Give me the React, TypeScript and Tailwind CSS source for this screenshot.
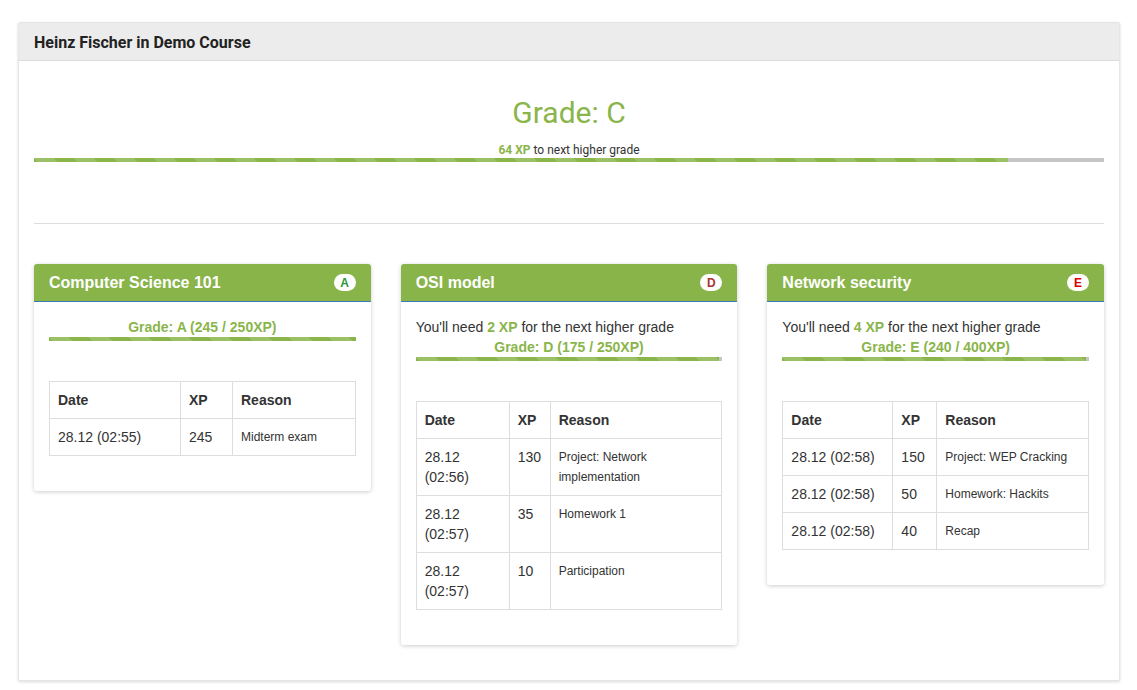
import React from "react";

type Row = { date: string; xp: number; reason: string };
type Course = {
  title: string;
  grade: string;
  badgeColor: string;
  need?: number;
  points: string;
  progress: number;
  dateCol: string;
  xpCol: string;
  rows: Row[];
};

const COURSES: Course[] = [
  {
    title: "Computer Science 101",
    grade: "A",
    badgeColor: "text-[#2a9a3a]",
    points: "245 / 250XP",
    progress: 100,
    dateCol: "w-[131px]",
    xpCol: "w-[52px]",
    rows: [{ date: "28.12 (02:55)", xp: 245, reason: "Midterm exam" }],
  },
  {
    title: "OSI model",
    grade: "D",
    badgeColor: "text-[#a33]",
    need: 2,
    points: "175 / 250XP",
    progress: 99,
    dateCol: "w-[93px]",
    xpCol: "w-[41px]",
    rows: [
      { date: "28.12 (02:56)", xp: 130, reason: "Project: Network implementation" },
      { date: "28.12 (02:57)", xp: 35, reason: "Homework 1" },
      { date: "28.12 (02:57)", xp: 10, reason: "Participation" },
    ],
  },
  {
    title: "Network security",
    grade: "E",
    badgeColor: "text-[#d00]",
    need: 4,
    points: "240 / 400XP",
    progress: 99,
    dateCol: "w-[110px]",
    xpCol: "w-[44px]",
    rows: [
      { date: "28.12 (02:58)", xp: 150, reason: "Project: WEP Cracking" },
      { date: "28.12 (02:58)", xp: 50, reason: "Homework: Hackits" },
      { date: "28.12 (02:58)", xp: 40, reason: "Recap" },
    ],
  },
];

function ProgressBar({ value }: { value: number }) {
  return (
    <div className="h-[4px] w-full bg-[#c6c6c6] flex">
      <div
        className="h-full bg-[#8ab54b] bg-[linear-gradient(45deg,rgba(255,255,255,.15)_25%,transparent_25%,transparent_50%,rgba(255,255,255,.15)_50%,rgba(255,255,255,.15)_75%,transparent_75%,transparent)] bg-[length:40px_40px]"
        style={{ width: `${value}%` }}
      ></div>
    </div>
  );
}

function CourseCard({ course }: { course: Course }) {
  return (
    <div className="flex-1 bg-white rounded-[3px] shadow-[0_1px_4px_rgba(0,0,0,0.2)] overflow-hidden">
      <div className="h-[38px] bg-[#88b449] border-b border-[#3b7bb5] flex items-center justify-between px-[15px]">
        <span className="text-white font-bold text-[16px] font-['Liberation_Sans',Arial,sans-serif]">
          {course.title}
        </span>
        <span
          className={`bg-white rounded-full w-[22px] h-[17px] flex items-center justify-center text-[12px] font-bold font-['Liberation_Sans',Arial,sans-serif] ${course.badgeColor}`}
        >
          {course.grade}
        </span>
      </div>
      <div className="p-[15px] font-['Liberation_Sans',Arial,sans-serif] text-[#333]">
        {course.need !== undefined && (
          <div className="text-[14px] leading-[20px]">
            You'll need <b className="text-[#8ab54b]">{course.need} XP</b> for the next higher grade
          </div>
        )}
        <div className="text-[14px] leading-[20px] font-bold text-[#8ab54b] text-center">
          Grade: {course.grade} ({course.points})
        </div>
        <ProgressBar value={course.progress} />
        <table className="w-full mt-[40px] mb-[20px] border-collapse border border-[#ddd] text-[14px] leading-[20px]">
          <thead>
            <tr>
              <th className={`border border-[#ddd] p-[8px] text-left font-bold ${course.dateCol}`}>Date</th>
              <th className={`border border-[#ddd] p-[8px] text-left font-bold ${course.xpCol}`}>XP</th>
              <th className="border border-[#ddd] p-[8px] text-left font-bold">Reason</th>
            </tr>
          </thead>
          <tbody>
            {course.rows.map((r, i) => (
              <tr key={i}>
                <td className="border border-[#ddd] p-[8px] align-top">{r.date}</td>
                <td className="border border-[#ddd] p-[8px] align-top">{r.xp}</td>
                <td className="border border-[#ddd] p-[8px] align-top text-[12px]">{r.reason}</td>
              </tr>
            ))}
          </tbody>
        </table>
      </div>
    </div>
  );
}

export default function App() {
  return (
    <div className="min-h-screen bg-white pt-[22px] pl-[18px] pr-[17px] pb-[9px]">
      <div className="bg-white border border-[#e6e6e6] shadow-[0_1px_3px_rgba(0,0,0,0.15)] rounded-[2px]">
        <div className="h-[38px] bg-[#ececec] border-b border-[#dcdcdc] flex items-center px-[15px]">
          <span className="font-['Roboto',sans-serif] font-bold text-[16px] text-[#222] translate-y-[1px]">
            Heinz Fischer in Demo Course
          </span>
        </div>
        <div className="px-[15px] pb-[35px]">
          <div className="text-center font-['Roboto',sans-serif] text-[#8ab54b] text-[30px] leading-[36px] pt-[34px]">
            Grade: C
          </div>
          <div className="text-center font-['Roboto',sans-serif] text-[12px] leading-[16px] mt-[11px] text-[#333]">
            <b className="text-[#8ab54b]">64 XP</b> to next higher grade
          </div>
          <ProgressBar value={91} />
          <div className="mt-[61px] border-t border-[#ddd]"></div>
          <div className="flex items-start gap-[30px] mt-[40px]">
            {COURSES.map((c) => (
              <CourseCard key={c.title} course={c} />
            ))}
          </div>
        </div>
      </div>
    </div>
  );
}
